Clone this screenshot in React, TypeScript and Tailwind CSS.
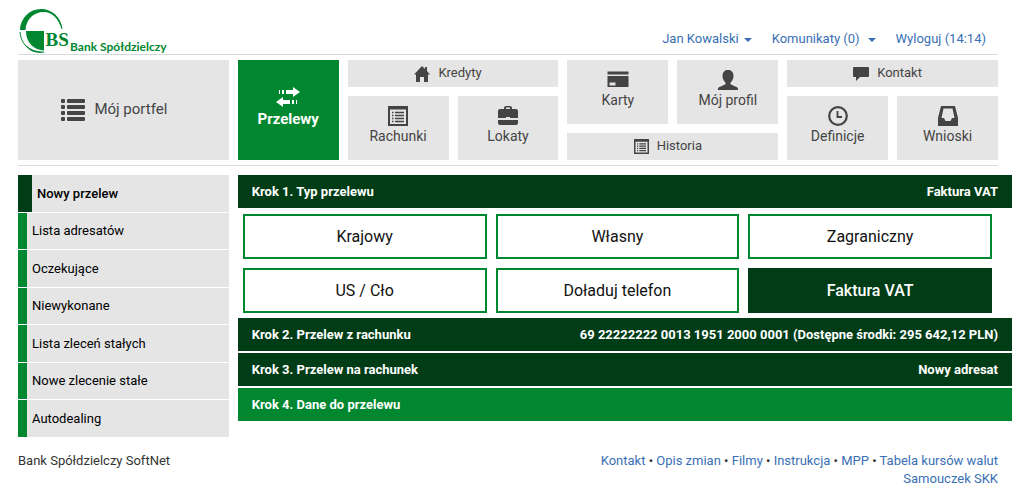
import type { ReactNode } from 'react';

interface TileProps {
  label: string;
  icon: ReactNode;
  className?: string;
}

interface StepProps {
  title: string;
  value?: string;
  current?: boolean;
}

const menu = [
  'Nowy przelew',
  'Lista adresatów',
  'Oczekujące',
  'Niewykonane',
  'Lista zleceń stałych',
  'Nowe zlecenie stałe',
  'Autodealing',
];

const transferTypes = ['Krajowy', 'Własny', 'Zagraniczny', 'US / Cło', 'Doładuj telefon', 'Faktura VAT'];

const footerLinks = ['Kontakt', 'Opis zmian', 'Filmy', 'Instrukcja', 'MPP', 'Tabela kursów walut'];

function Logo() {
  return (
    <a href="#" className="flex items-end text-[#008730]" aria-label="Bank Spółdzielczy">
      <svg width="52" height="46" viewBox="0 0 52 46" fill="currentColor">
        <path d="M2 22A21 21 0 0 1 23 1C34 1 43 9 44.500 21H43.500C41 11 34 4 26 4C15 4 8 12 7.500 22Z" />
        <path d="M8 23H26V42.500C16 42 8 35 8 23Z" />
        <path d="M2 24C2.500 33 8 40 15 43" fill="none" stroke="currentColor" strokeWidth="1" />
        <path d="M8 37C13 42 19 43.500 26 43.500V44.500C18 46 11 43 8 37Z" />
        <text x="27.500" y="38" fontSize="19" fontWeight="700" fontFamily="Liberation Serif, serif">
          BS
        </text>
      </svg>
      <span className="font-[Lato,sans-serif] text-xs leading-[14px] font-bold">Bank Spółdzielczy</span>
    </a>
  );
}

function ListIcon() {
  return (
    <svg width="24" height="22" viewBox="0 0 24 22" fill="currentColor">
      {[0, 6, 12, 18].map((y) => (
        <g key={y}>
          <rect x="0" y={y} width="4" height="4" rx="1" />
          <rect x="6" y={y} width="18" height="4" rx="1" />
        </g>
      ))}
    </svg>
  );
}

function TransferIcon() {
  return (
    <svg width="24" height="20" viewBox="0 0 24 20" fill="currentColor">
      <path d="M3 3h1v4H3zM6 3h2v4H6zM10 3h7V0l7 5-7 5V7h-7z" />
      <path d="M21 13h-1v4h1zM18 13h-2v4h2zM14 13H7v-3l-7 5 7 5v-3h7z" />
    </svg>
  );
}

function HomeIcon() {
  return (
    <svg width="16" height="16" viewBox="0 0 16 16" fill="currentColor">
      <path d="M8 0l3 3V1h2v4l3 3.500H14V16h-4v-5H6v5H2V8.500H0z" />
    </svg>
  );
}

function ListAltIcon({ size }: { size: number }) {
  return (
    <svg width={size} height={size} viewBox="0 0 20 20">
      <path d="M0 0h20v20H0zM2 3.500V18h16V3.500z" fill="currentColor" fillRule="evenodd" />
      <path d="M4 6.500h1.500M7 6.500h9M4 9.500h1.500M7 9.500h9M4 12.500h1.500M7 12.500h9M4 15.500h1.500M7 15.500h9" stroke="currentColor" strokeWidth="1.400" />
    </svg>
  );
}

function BriefcaseIcon() {
  return (
    <svg width="22" height="20" viewBox="0 0 22 20" fill="currentColor">
      <path d="M7 3V2a2 2 0 0 1 2-2h4a2 2 0 0 1 2 2v1h4a2 2 0 0 1 2 2v7h-8v-1H9v1H1V5a2 2 0 0 1 2-2zM9 3h4V1.500H9z" fillRule="evenodd" />
      <path d="M1 14h20v3a2 2 0 0 1-2 2H3a2 2 0 0 1-2-2z" />
    </svg>
  );
}

function CardIcon() {
  return (
    <svg width="22" height="20" viewBox="0 0 22 20">
      <path d="M0.500 1.500h21v3h-21zM0.500 6h21v11h-21zM2.500 12.500v3h6v-3z" fill="currentColor" fillRule="evenodd" />
    </svg>
  );
}

function UserIcon() {
  return (
    <svg width="22" height="20" viewBox="0 0 22 20" fill="currentColor">
      <path d="M11 0c3 0 5.500 2 5.500 5.500 0 3-1 5.500-3 7v1.500c0 1 7 2.500 7.500 4.500.2.500 0 1.500 0 1.500H1s-.2-1 0-1.500C1.500 16.500 8.500 15 8.500 14v-1.500c-2-1.500-3-4-3-7C5.500 2 8 0 11 0z" />
    </svg>
  );
}

function CommentIcon() {
  return (
    <svg width="16" height="14" viewBox="0 0 16 14" fill="currentColor">
      <path d="M1 0h14a1 1 0 0 1 1 1v8a1 1 0 0 1-1 1H7l-4 4v-4H1a1 1 0 0 1-1-1V1a1 1 0 0 1 1-1z" />
    </svg>
  );
}

function ClockIcon() {
  return (
    <svg width="20" height="20" viewBox="0 0 20 20" fill="none" stroke="currentColor">
      <circle cx="10" cy="10" r="8.800" strokeWidth="2.200" />
      <path d="M9.500 5v6H14" strokeWidth="1.800" />
    </svg>
  );
}

function InboxIcon() {
  return (
    <svg width="22" height="20" viewBox="0 0 22 20" fill="currentColor">
      <path d="M4 0h14l3 12v8H1v-8zM6.500 2.500L4.500 12H7l1.500 3h5l1.500-3h2.500l-2-9.500z" fillRule="evenodd" />
    </svg>
  );
}

function Tile({ label, icon, className = '' }: TileProps) {
  return (
    <a href="#" className={`flex flex-col items-center bg-[#e5e5e5] pt-[10px] text-sm text-[#444] ${className}`}>
      {icon}
      {label}
    </a>
  );
}

function WideTile({ label, icon }: TileProps) {
  return (
    <a href="#" className="col-span-2 flex h-[27px] items-center justify-center gap-2 bg-[#e5e5e5] pr-[10px] text-[13px] text-[#444]">
      {icon}
      {label}
    </a>
  );
}

function Step({ title, value, current }: StepProps) {
  return (
    <button
      type="button"
      className={`flex h-[33px] w-full items-center justify-between px-[14px] pt-px text-[13px] font-bold text-white ${
        current ? 'bg-[#008730]' : 'bg-[#003d17]'
      }`}
    >
      <span>{title}</span>
      <span>{value}</span>
    </button>
  );
}

function Caret() {
  return (
    <svg width="8" height="4" viewBox="0 0 8 4" fill="currentColor">
      <path d="M0 0h8L4 4z" />
    </svg>
  );
}

export default function App() {
  return (
    <div className="bg-white pr-[25px] pl-[18px] font-[Roboto,sans-serif] text-sm text-[#333]">
      <header className="flex h-[55px] items-end justify-between border-b border-[#d5d9dc]">
        <Logo />
        <nav className="mb-[5px] flex items-center pr-3 text-[13px] text-[#3a6fb5]">
          <button type="button" className="mr-5 flex items-center gap-[5px]">
            Jan Kowalski <Caret />
          </button>
          <button type="button" className="mr-5 flex items-center gap-2">
            Komunikaty (0) <Caret />
          </button>
          <a href="#">Wyloguj (14:14)</a>
        </nav>
      </header>

      <nav className="grid grid-cols-9 gap-[9px] border-b border-[#d5dee2] pt-[5px] pb-[5px]">
        <a href="#" className="col-span-2 flex items-center justify-center gap-[9px] bg-[#e5e5e5] pr-[18px] text-[15px] text-[#444]">
          <ListIcon />
          Mój portfel
        </a>
        <a href="#" className="flex flex-col items-center bg-[#008730] pt-[27px] text-[15px] leading-6 font-bold text-white">
          <TransferIcon />
          Przelewy
        </a>
        <div className="col-span-2 grid grid-cols-2 gap-[9px]">
          <WideTile label="Kredyty" icon={<HomeIcon />} />
          <Tile label="Rachunki" icon={<ListAltIcon size={20} />} className="h-16" />
          <Tile label="Lokaty" icon={<BriefcaseIcon />} className="h-16" />
        </div>
        <div className="col-span-2 grid grid-cols-2 gap-[9px]">
          <Tile label="Karty" icon={<CardIcon />} className="h-16" />
          <Tile label="Mój profil" icon={<UserIcon />} className="h-16" />
          <WideTile label="Historia" icon={<ListAltIcon size={15} />} />
        </div>
        <div className="col-span-2 grid grid-cols-2 gap-[9px]">
          <WideTile label="Kontakt" icon={<CommentIcon />} />
          <Tile label="Definicje" icon={<ClockIcon />} className="h-16" />
          <Tile label="Wnioski" icon={<InboxIcon />} className="h-16" />
        </div>
      </nav>

      <div className="mt-[9px] grid grid-cols-9 gap-[9px]">
        {/* Side menu */}
        <aside className="col-span-2 grid min-h-[262px] auto-rows-fr gap-px text-[13px] text-black">
          {menu.map((item, index) => (
            <a
              key={item}
              href="#"
              className={`flex items-center bg-[#e5e5e5] pt-px pl-[5px] ${
                index === 0 ? 'border-l-[14px] border-[#003d17] font-medium' : 'border-l-[9px] border-[#008730]'
              }`}
            >
              {item}
            </a>
          ))}
        </aside>

        {/* Transfer steps */}
        <main className="col-span-7 -mr-[14px]">
          <Step title="Krok 1. Typ przelewu" value="Faktura VAT" />
          <div className="grid grid-cols-3 gap-[9px] pt-[6px] pr-5 pb-[5px] pl-[5px]">
            {transferTypes.map((type) => (
              <button
                key={type}
                type="button"
                className={`h-[45px] border-2 text-base ${
                  type === 'Faktura VAT'
                    ? 'border-[#003d17] bg-[#003d17] font-medium text-white'
                    : 'border-[#008730] bg-white text-[#111]'
                }`}
              >
                {type}
              </button>
            ))}
          </div>
          <div className="flex flex-col gap-[2px]">
            <Step title="Krok 2. Przelew z rachunku" value="69 22222222 0013 1951 2000 0001 (Dostępne środki: 295 642,12 PLN)" />
            <Step title="Krok 3. Przelew na rachunek" value="Nowy adresat" />
            <Step title="Krok 4. Dane do przelewu" current />
          </div>
        </main>
      </div>

      <footer className="mt-[15px] flex justify-between text-[13px] leading-[18px]">
        <p>Bank Spółdzielczy SoftNet</p>
        <div className="text-right text-[#3a6fb5]">
          {footerLinks.map((link, index) => (
            <span key={link}>
              {index > 0 && <span className="text-[#333]"> • </span>}
              <a href="#">{link}</a>
            </span>
          ))}
          <br />
          <a href="#">Samouczek SKK</a>
        </div>
      </footer>
    </div>
  );
}
